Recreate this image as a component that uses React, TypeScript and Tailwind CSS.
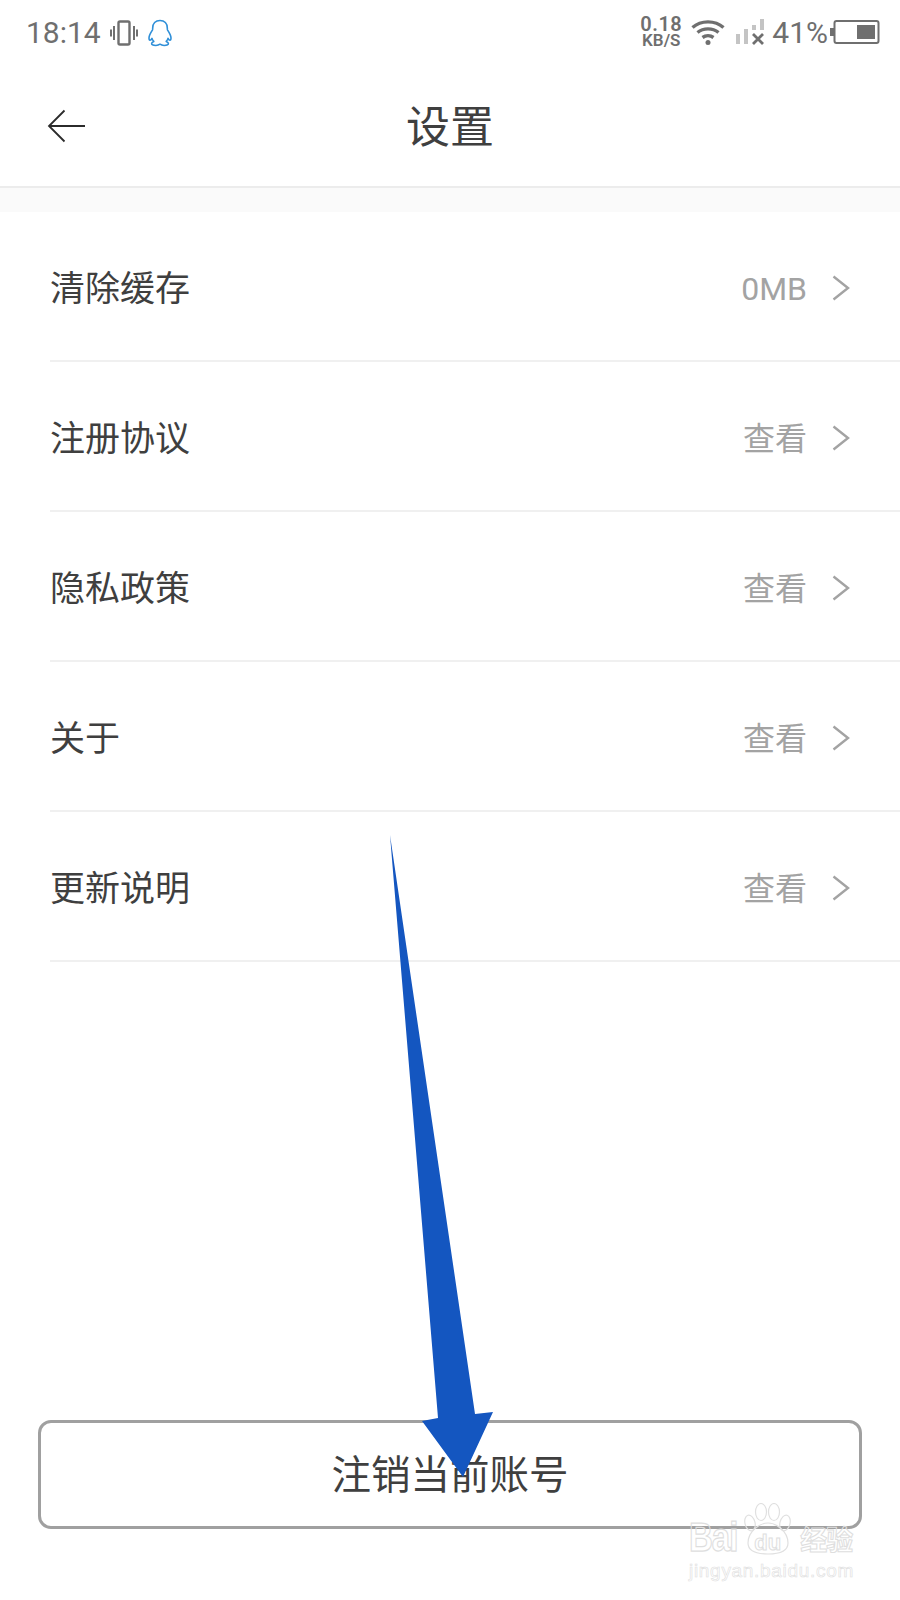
import React from "react";

const font = { fontFamily: '"Roboto", "Noto Sans CJK SC", sans-serif' };

function Chevron() {
  return (
    <svg width="18" height="26" viewBox="0 0 18 26" fill="none" className="block -translate-y-px">
      <path d="M1.5 1.5 L16 13 L1.5 24.5" stroke="#a3a3a3" strokeWidth="2.4" />
    </svg>
  );
}

function Row({ label, value }: { label: string; value: string }) {
  return (
    <div className="h-[150px] pl-[50px] flex">
      <div className="flex-1 flex items-center justify-between border-b-2 border-[#f0f0f0] pr-[50px] pt-[6px]">
        <span className="text-[35px] leading-none text-[#3f3f3f]">{label}</span>
        <div className="flex items-center gap-[25px]">
          <span className="text-[32px] leading-none text-[#a3a3a3]">{value}</span>
          <Chevron />
        </div>
      </div>
    </div>
  );
}

function StatusBar() {
  return (
    <div className="h-[64px] flex items-center justify-between pl-[26px] pr-[20px] text-[#6f6f6f]">
      <div className="flex items-center pt-[1px]">
        <span className="text-[30px] leading-none">18:14</span>
        <svg width="28" height="26" viewBox="0 0 28 26" fill="none" className="ml-[9px]">
          <rect x="8.5" y="1.5" width="11" height="23" rx="1.5" stroke="#6f6f6f" strokeWidth="2.4" />
          <path d="M4 6v14M1 9.5v7M24 6v14M27 9.5v7" stroke="#6f6f6f" strokeWidth="2" />
        </svg>
        <svg width="26" height="28" viewBox="0 0 26 28" fill="none" className="ml-[10px] -translate-x-[1px]">
          <path
            d="M13 1.5c-4.6 0-7.2 3.2-7.3 7.4 0 1 0 1.6-.3 2.2-1 1.6-3.4 5-3.4 8 0 1.4.5 2.1 1 2.1.8 0 1.6-1 2-1.8.3 1.2.9 2.2 1.8 3-1.3.5-2.2 1.2-2.2 2.2 0 1.3 2 1.9 4.300 1.900 1.700 0 3.100-.5 4.100-1.300 1 .8 2.400 1.300 4.100 1.300 2.300 0 4.300-.6 4.300-1.900 0-1-.9-1.700-2.200-2.200.9-.8 1.500-1.800 1.800-3 .4.800 1.200 1.800 2 1.800.5 0 1-.7 1-2.100 0-3-2.400-6.400-3.400-8-.3-.6-.3-1.200-.3-2.200C20.200 4.700 17.600 1.500 13 1.500z"
            stroke="#2f8fd8"
            strokeWidth="1.6"
            strokeLinejoin="round"
          />
        </svg>
      </div>
      <div className="flex items-center">
        <div className="flex flex-col items-center font-semibold text-[#6f6f6f] w-[42px] -translate-y-px">
          <span className="text-[20px] leading-[18px] tracking-[0.5px]">0.18</span>
          <span className="text-[17px] leading-[15px]">KB/S</span>
        </div>
        <svg width="34" height="26" viewBox="0 0 34 26" fill="none" className="ml-[9px]">
          <path d="M1.500 8.500C10 1 24 1 32.500 8.500M6.500 13.500c6-4.800 15-4.800 21 0M11.500 18.500c3.200-2.300 7.800-2.300 11 0" stroke="#6f6f6f" strokeWidth="3.400" />
          <circle cx="17" cy="23.500" r="2.500" fill="#6f6f6f" />
        </svg>
        <svg width="30" height="26" viewBox="0 0 30 26" className="ml-[11px]">
          <rect x="0" y="15" width="4" height="10" fill="#c4c4c4" />
          <rect x="8" y="10" width="4" height="15" fill="#c4c4c4" />
          <rect x="16" y="6" width="4" height="5" fill="#c4c4c4" />
          <rect x="24" y="0" width="4" height="11" fill="#c4c4c4" />
          <path d="M17 15l10 10M27 15l-10 10" stroke="#6f6f6f" strokeWidth="2.800" />
        </svg>
        <span className="text-[30px] leading-none ml-[6px] pt-[2px]">41%</span>
        <svg width="50" height="24" viewBox="0 0 50 24" fill="none" className="ml-[2px]">
          <rect x="0" y="8" width="4" height="8" fill="#6f6f6f" />
          <rect x="4.500" y="1" width="44" height="22" rx="2" stroke="#6f6f6f" strokeWidth="2" />
          <rect x="27" y="5" width="18" height="14" fill="#6f6f6f" />
        </svg>
      </div>
    </div>
  );
}

function Watermark() {
  const stroke = "text-transparent [-webkit-text-stroke:1px_#dedede]";
  return (
    <div className="absolute left-[689px] top-[1503px] w-[170px] pointer-events-none" style={{ fontFamily: '"Liberation Sans", "Noto Sans CJK SC", sans-serif' }}>
      <svg width="52" height="54" viewBox="0 0 52 54" fill="none" className="absolute left-[54px] top-0" stroke="#e0e0e0" strokeWidth="1.200">
        <ellipse cx="7" cy="20" rx="5" ry="8" transform="rotate(-15 7 20)" />
        <ellipse cx="18" cy="9" rx="5.500" ry="8.500" />
        <ellipse cx="31" cy="9" rx="5.500" ry="8.500" />
        <ellipse cx="42" cy="20" rx="5" ry="8" transform="rotate(15 42 20)" />
        <path d="M25 20c-8 0-20 8-20 20 0 8 8 11 20 11s20-3 20-11c0-12-12-20-20-20z" />
      </svg>
      <div className="flex items-end h-[54px]">
        <span className={`text-[33px] leading-[33px] font-bold origin-bottom scale-y-125 tracking-[-1px] ${stroke}`}>Bai</span>
        <span className={`text-[22px] leading-[28px] ml-[17px] font-bold ${stroke}`}>du</span>
        <span className={`text-[27px] leading-[31px] ml-[19px] font-bold tracking-[-1px] ${stroke}`}>经验</span>
      </div>
      <div className="text-[19px] leading-[20px] mt-[4px] tracking-[0.7px] text-transparent [-webkit-text-stroke:0.6px_#dedede]">
        jingyan.baidu.com
      </div>
    </div>
  );
}

export default function App() {
  return (
    <div className="relative w-[900px] h-[1600px] bg-white overflow-hidden flex flex-col" style={font}>
      <StatusBar />
      <div className="h-[124px] relative flex items-center justify-center border-b-2 border-[#ececec] pt-[6px]">
        <svg width="40" height="34" viewBox="0 0 40 34" fill="none" className="absolute left-[47px] top-[45px]">
          <path d="M38 17H2M17.500 1.500L2 17l15.500 15.500" stroke="#2b2b2b" strokeWidth="1.800" />
        </svg>
        <span className="text-[44px] leading-none text-[#3f3f3f]">设置</span>
      </div>
      <div className="h-[24px] bg-[#fafafa]" />
      <div className="flex flex-col">
        <Row label="清除缓存" value="0MB" />
        <Row label="注册协议" value="查看" />
        <Row label="隐私政策" value="查看" />
        <Row label="关于" value="查看" />
        <Row label="更新说明" value="查看" />
      </div>
      <div className="flex-1 flex items-end px-[38px] pb-[71px]">
        <div className="w-full h-[109px] border-[3px] border-[#a0a0a0] rounded-[13px] flex items-center justify-center">
          <span className="text-[39.500px] leading-none text-[#3f3f3f] pt-[2px]">注销当前账号</span>
        </div>
      </div>
      <svg width="900" height="1600" viewBox="0 0 900 1600" className="absolute inset-0 pointer-events-none">
        <polygon points="390,835 475,1414 493,1412 463,1477 422,1421 438,1418" fill="#1456c0" />
      </svg>
      <Watermark />
    </div>
  );
}
